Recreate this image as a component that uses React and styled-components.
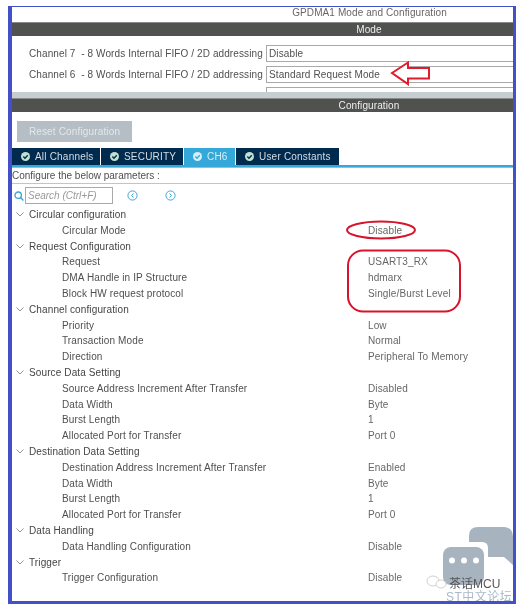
import React from "react"
import styled, { createGlobalStyle } from "styled-components"

const GlobalStyle = createGlobalStyle`
  html, body {
    margin: 0;
    padding: 0;
    background: #fff;
  }
`

const Page = styled.div`
  width: 522px;
  height: 611px;
  padding: 6px 6px 7px 8px;
  box-sizing: border-box;
  overflow: hidden;
  font-family: "Liberation Sans", Arial, sans-serif;
  font-size: 10px;
  color: #4f4f4f;
`

const Frame = styled.div`
  position: relative;
  height: 100%;
  box-sizing: border-box;
  border: solid #4450c8;
  border-width: 1.5px 3px 3px 4px;
  background: #fff;
  overflow: hidden;
  filter: blur(0.4px);
`

const Title = styled.div`
  height: 15px;
  line-height: 12px;
  padding-left: 214px;
  text-align: center;
  letter-spacing: 0.1px;
  color: #666;
`

const Bar = styled.div`
  height: 14px;
  line-height: 13px;
  padding-left: 213px;
  box-sizing: border-box;
  border-top: 1px solid #8a8a8a;
  background: #505250;
  color: #eee;
  text-align: center;
  letter-spacing: 0.1px;
`

const ModePanel = styled.div`
  height: 56px;
  padding-top: 9px;
  box-sizing: border-box;
  overflow: hidden;
  display: flex;
  flex-direction: column;
  gap: 4px;
`

const ChannelRow = styled.div`
  display: flex;
  align-items: center;
  height: 17px;
  flex: none;
`

const ChannelLabel = styled.div`
  width: 254px;
  padding-left: 17px;
  box-sizing: border-box;
  white-space: pre;
  letter-spacing: 0.1px;
  line-height: 17px;
`

const ChannelField = styled.div`
  flex: 1;
  height: 17px;
  line-height: 16px;
  padding-left: 2px;
  box-sizing: border-box;
  border: 1px solid #a9a9a9;
  border-right: none;
  letter-spacing: 0.12px;
`

const Strip = styled.div`
  height: 6px;
  background: #c6ced1;
`

const ConfigBody = styled.div`
  padding-top: 9px;
`

const ResetButton = styled.div`
  width: 115px;
  height: 21px;
  margin-left: 5px;
  line-height: 21px;
  text-align: center;
  background: #b5bec4;
  color: #e3e8ea;
  letter-spacing: 0.15px;
`

const Tabs = styled.div`
  display: flex;
  gap: 1px;
  height: 17px;
  margin-top: 6px;
  border-bottom: 2px solid #34a8d8;
`

const Tab = styled.div`
  display: flex;
  align-items: center;
  gap: 5px;
  width: ${p => p.$w}px;
  padding-left: 9px;
  box-sizing: border-box;
  background: ${p => (p.$active ? "#34a8d8" : "#002a4e")};
  color: ${p => (p.$active ? "#d8eef8" : "#d5dde5")};
  letter-spacing: 0.2px;
  white-space: nowrap;
`

const Hint = styled.div`
  height: 15px;
  line-height: 16px;
  border-top: 1px solid #b5b5b5;
  border-bottom: 1px solid #c4c4c4;
`

const SearchRow = styled.div`
  display: flex;
  align-items: center;
  height: 17px;
  margin-top: 3px;
  padding-left: 2px;
`

const SearchInput = styled.div`
  width: 88px;
  height: 17px;
  margin-left: 1px;
  padding-left: 2px;
  box-sizing: border-box;
  line-height: 15px;
  border: 1px solid #aaa;
  font-style: italic;
  color: #999;
`

const NavIcon = styled.svg`
  width: 11px;
  height: 11px;
  margin-left: ${p => p.$gap}px;
`

const Tree = styled.div`
  margin-top: 3px;
`

const Row = styled.div`
  display: flex;
  align-items: center;
  height: 15.8px;
  line-height: 15.8px;
  letter-spacing: 0.12px;
`

const Chevron = styled.svg`
  width: 8px;
  height: 5px;
  margin: 0 5px 0 4px;
  flex: none;
`

const GroupName = styled.span`
  color: #444;
`

const ParamName = styled.span`
  width: 356px;
  padding-left: 50px;
  box-sizing: border-box;
  flex: none;
  white-space: nowrap;
`

const ParamValue = styled.span`
  color: #666;
  white-space: nowrap;
`

const Overlay = styled.svg`
  position: absolute;
  left: 0;
  top: 0;
  width: 505px;
  height: 597px;
  pointer-events: none;
`

const WatermarkName = styled.div`
  position: absolute;
  left: 437px;
  top: 567px;
  color: #555;
  font-size: 12px;
  font-family: "Liberation Sans", "Noto Sans CJK SC", sans-serif;
  white-space: nowrap;
`

const WatermarkForum = styled.div`
  position: absolute;
  left: 434px;
  top: 580px;
  color: #a9b8ca;
  font-size: 12px;
  letter-spacing: 0.5px;
  font-family: "Liberation Sans", "Noto Sans CJK SC", sans-serif;
  white-space: nowrap;
`

const tabs = [
  { label: "All Channels", w: 88 },
  { label: "SECURITY", w: 82 },
  { label: "CH6", w: 51, active: true },
  { label: "User Constants", w: 103 },
]

const groups = [
  { name: "Circular configuration", params: [["Circular Mode", "Disable"]] },
  {
    name: "Request Configuration",
    params: [
      ["Request", "USART3_RX"],
      ["DMA Handle in IP Structure", "hdmarx"],
      ["Block HW request protocol", "Single/Burst Level"],
    ],
  },
  {
    name: "Channel configuration",
    params: [
      ["Priority", "Low"],
      ["Transaction Mode", "Normal"],
      ["Direction", "Peripheral To Memory"],
    ],
  },
  {
    name: "Source Data Setting",
    params: [
      ["Source Address Increment After Transfer", "Disabled"],
      ["Data Width", "Byte"],
      ["Burst Length", "1"],
      ["Allocated Port for Transfer", "Port 0"],
    ],
  },
  {
    name: "Destination Data Setting",
    params: [
      ["Destination Address Increment After Transfer", "Enabled"],
      ["Data Width", "Byte"],
      ["Burst Length", "1"],
      ["Allocated Port for Transfer", "Port 0"],
    ],
  },
  { name: "Data Handling", params: [["Data Handling Configuration", "Disable"]] },
  { name: "Trigger", params: [["Trigger Configuration", "Disable"]] },
]

const TabCheck = ({ active }) => (
  <svg width="9" height="9" viewBox="0 0 10 10">
    <circle cx="5" cy="5" r="5" fill={active ? "#d8eef8" : "#bfe3d0"} />
    <path d="M2.6 5.1 4.4 6.9 7.5 3.6" fill="none" stroke={active ? "#34a8d8" : "#002a4e"} strokeWidth="1.5" />
  </svg>
)

const Nav = ({ gap, flip }) => (
  <NavIcon $gap={gap} viewBox="0 0 11 11">
    <circle cx="5.5" cy="5.5" r="4.6" fill="none" stroke="#3fa6d6" strokeWidth="1" />
    <path d={flip ? "M4.5 3.5 6.5 5.5 4.5 7.5" : "M6.5 3.5 4.5 5.5 6.5 7.5"} fill="none" stroke="#3fa6d6" strokeWidth="1" />
  </NavIcon>
)

const Annotations = () => (
  <Overlay viewBox="0 0 505 597">
    {/* coordinates are relative to the frame's padding box */}
    <path
      d="M380 66 L396 55.5 L396 61 L417 61 L417 71.5 L396 71.5 L396 77 Z"
      fill="#fff"
      stroke="#e01b2c"
      strokeWidth="2"
    />
    <ellipse cx="369" cy="223" rx="34" ry="8.5" fill="none" stroke="#d8142c" strokeWidth="2" />
    <rect x="336" y="243.5" width="112" height="61" rx="15" fill="none" stroke="#d8142c" strokeWidth="2" />
    {/* chat bubbles */}
    <path
      d="M457 529 Q457 520 466 520 L491 520 Q501 520 501 530 L501 558 L492 550 L476 550 L476 541 Q476 535 470 535 L457 535 Z"
      fill="#a8b3c0"
    />
    <rect x="431" y="540" width="41" height="38" rx="8" fill="#a8b3c0" />
    <circle cx="440" cy="553.5" r="3" fill="#fff" />
    <circle cx="452" cy="553.5" r="3" fill="#fff" />
    <circle cx="464" cy="553.5" r="3" fill="#fff" />
    {/* wechat mark */}
    <g fill="#fff" stroke="#bbb" strokeWidth="0.7">
      <ellipse cx="421" cy="574" rx="6" ry="5" />
      <ellipse cx="429" cy="577" rx="5" ry="4" />
    </g>
  </Overlay>
)

export default function App() {
  return (
    <Page>
      <GlobalStyle />
      <Frame>
        <Title>GPDMA1 Mode and Configuration</Title>
        <Bar>Mode</Bar>
        <ModePanel>
          <ChannelRow>
            <ChannelLabel>Channel 7  - 8 Words Internal FIFO / 2D addressing</ChannelLabel>
            <ChannelField>Disable</ChannelField>
          </ChannelRow>
          <ChannelRow>
            <ChannelLabel>Channel 6  - 8 Words Internal FIFO / 2D addressing</ChannelLabel>
            <ChannelField>Standard Request Mode</ChannelField>
          </ChannelRow>
          <ChannelRow>
            <ChannelLabel />
            <ChannelField />
          </ChannelRow>
        </ModePanel>
        <Strip />
        <Bar>Configuration</Bar>
        <ConfigBody>
          <ResetButton>Reset Configuration</ResetButton>
          <Tabs>
            {tabs.map(t => (
              <Tab key={t.label} $w={t.w} $active={t.active}>
                <TabCheck active={t.active} />
                {t.label}
              </Tab>
            ))}
          </Tabs>
          <Hint>Configure the below parameters :</Hint>
          <SearchRow>
            <svg width="10" height="10" viewBox="0 0 10 10">
              <circle cx="4.2" cy="4.2" r="3.2" fill="none" stroke="#3fa6d6" strokeWidth="1.4" />
              <path d="M6.6 6.6 9.4 9.4" stroke="#3fa6d6" strokeWidth="1.4" />
            </svg>
            <SearchInput>Search (Ctrl+F)</SearchInput>
            <Nav gap={14} />
            <Nav gap={27} flip />
          </SearchRow>
          <Tree>
            {groups.map(g => (
              <React.Fragment key={g.name}>
                <Row>
                  <Chevron viewBox="0 0 8 5">
                    <path d="M0.5 0.5 4 4 7.5 0.5" fill="none" stroke="#888" strokeWidth="0.9" />
                  </Chevron>
                  <GroupName>{g.name}</GroupName>
                </Row>
                {g.params.map(([name, value]) => (
                  <Row key={g.name + name}>
                    <ParamName>{name}</ParamName>
                    <ParamValue>{value}</ParamValue>
                  </Row>
                ))}
              </React.Fragment>
            ))}
          </Tree>
        </ConfigBody>
        <Annotations />
        <WatermarkName>茶话MCU</WatermarkName>
        <WatermarkForum>ST中文论坛</WatermarkForum>
      </Frame>
    </Page>
  )
}
